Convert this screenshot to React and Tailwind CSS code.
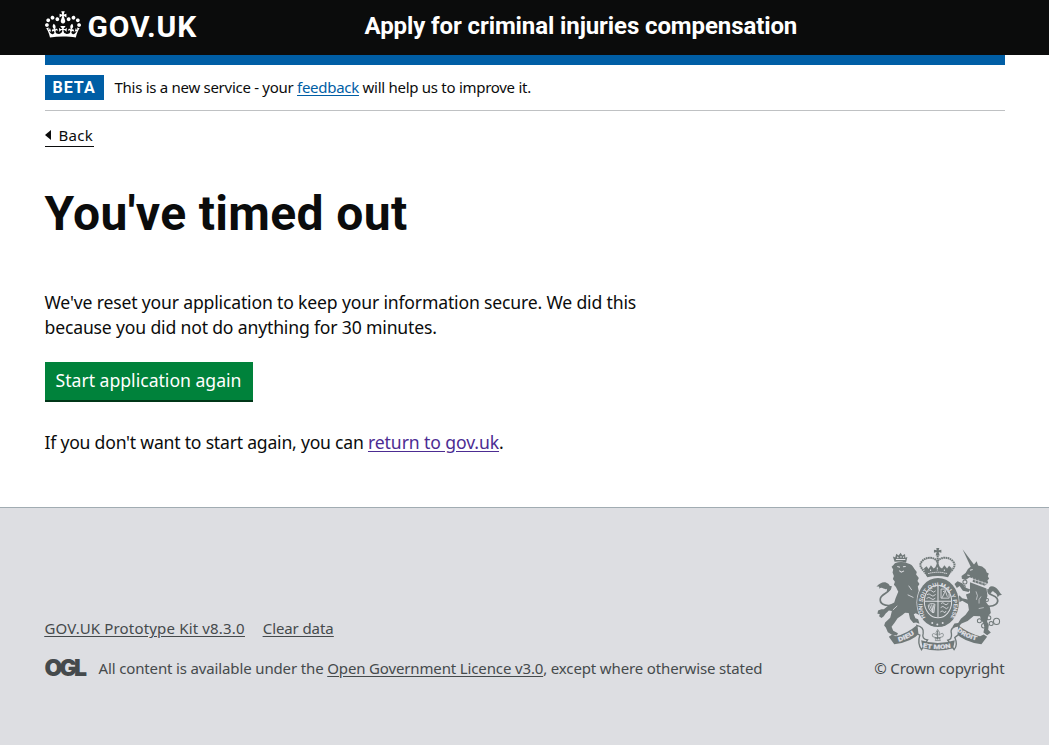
function CrownLogo() {
  return (
    <svg className="h-[27px] w-9" viewBox="0 0 132 97" fill="currentColor" fillRule="evenodd" aria-hidden="true">
      <path d="M25 30.2c3.5 1.5 7.7-.2 9.1-3.7 1.5-3.6-.2-7.8-3.9-9.2-3.6-1.4-7.6.3-9.1 3.9-1.4 3.5.3 7.5 3.9 9zM9 39.5c3.6 1.5 7.8-.2 9.2-3.7 1.5-3.6-.2-7.8-3.9-9.1-3.6-1.5-7.6.2-9.1 3.8-1.4 3.5.3 7.5 3.8 9zM4.4 57.2c3.5 1.5 7.7-.2 9.1-3.8 1.5-3.6-.2-7.7-3.9-9.1-3.5-1.5-7.6.3-9.1 3.8-1.4 3.5.3 7.6 3.9 9.1zm38.3-21.4c3.5 1.5 7.7-.2 9.1-3.8 1.5-3.6-.2-7.7-3.9-9.1-3.6-1.5-7.6.3-9.1 3.8-1.3 3.6.4 7.7 3.9 9.1zm64.4-5.6c-3.6 1.5-7.8-.2-9.1-3.7-1.5-3.6.2-7.8 3.8-9.2 3.6-1.4 7.7.3 9.2 3.9 1.3 3.5-.4 7.5-3.9 9zm15.9 9.3c-3.6 1.5-7.7-.2-9.1-3.7-1.5-3.6.2-7.8 3.7-9.1 3.6-1.5 7.7.2 9.2 3.8 1.5 3.5-.3 7.5-3.8 9zm4.7 17.7c-3.6 1.5-7.8-.2-9.2-3.8-1.5-3.6.2-7.7 3.9-9.1 3.6-1.5 7.7.3 9.2 3.8 1.3 3.5-.4 7.6-3.9 9.1zM89.3 35.8c-3.6 1.5-7.8-.2-9.2-3.8-1.4-3.6.2-7.7 3.9-9.1 3.6-1.5 7.7.3 9.2 3.8 1.4 3.6-.3 7.7-3.9 9.1zM69.7 17.7l8.9 4.7V9.3l-8.9 2.8c-.2-.3-.5-.6-.9-.9L72.4 0H59.6l3.5 11.2c-.3.3-.6.5-.9.9l-8.8-2.8v13.1l8.8-4.7c.3.3.6.7.9.9l-5 15.4v.1c-.2.8-.4 1.6-.4 2.4 0 4.1 3.1 7.5 7 8.1h.2c.3 0 .7.1 1 .1.4 0 .7 0 1-.1h.2c4-.6 7.1-4.1 7.1-8.1 0-.8-.1-1.7-.4-2.4V34l-5.1-15.4c.4-.2.7-.6 1-.9zM66 92.8c16.9 0 32.8 1.1 47.1 3.2 4-16.9 8.9-26.7 14-33.5l-9.6-3.4c1 4.9 1.1 7.2 0 10.2-1.5-1.4-3-4.3-4.2-8.7L108.6 76c2.8-2 5-3.2 7.5-3.3-4.4 9.4-10 11.9-13.6 11.2-4.3-.8-6.3-4.6-5.6-7.9 1-4.7 5.7-5.9 8-.5 4.3-8.7-3-11.4-7.6-8.8 7.1-7.2 7.9-13.5 2.1-21.1-8 6.1-8.1 12.3-4.5 20.8-4.7-5.4-12.1-2.5-9.5 6.2 3.4-5.2 7.9-2 7.2 3.1-.6 4.3-6.4 7.8-13.5 7.2-10.3-.9-10.9-8-11.2-13.8 2.5-.5 7.1 1.8 11 7.3L80.2 60c-4.1 4.4-8 5.3-12.3 5.4 1.4-4.4 8-11.6 8-11.6H55.5s6.4 7.2 7.9 11.6c-4.2-.1-8-1-12.3-5.4l1.4 16.4c3.9-5.5 8.5-7.7 10.9-7.3-.3 5.8-.9 12.8-11.1 13.8-7.2.6-12.9-2.9-13.5-7.2-.7-5 3.8-8.3 7.1-3.1 2.7-8.7-4.6-11.6-9.4-6.2 3.7-8.5 3.6-14.7-4.6-20.8-5.8 7.6-5 13.9 2.2 21.1-4.7-2.6-11.9.1-7.7 8.8 2.3-5.5 7.1-4.2 8.1.5.7 3.3-1.3 7.1-5.7 7.9-3.5.7-9-1.8-13.5-11.2 2.5.1 4.7 1.3 7.5 3.3l-4.7-15.4c-1.2 4.4-2.7 7.2-4.3 8.7-1.1-3-.9-5.3 0-10.2l-9.5 3.4c5 6.9 9.9 16.7 14 33.5 14.8-2.1 30.8-3.2 47.7-3.2z" />
    </svg>
  );
}

const dark = "#6f7878";
const pale = "#dddee2";

function RoyalArms() {
  return (
    <svg className="h-[104px] w-[126px]" viewBox="21 22 374 309" fill={dark} aria-hidden="true">
      {/* lion */}
      <path d="M76 66l-5-16 7 3 3-11 7 5 6-8 5 8 8-4 1 11 6-2-4 17q-16-6-34-3z" />
      <path d="M80 59h28M84 51l3 4M95 49v5M104 50l-2 4" stroke={pale} strokeWidth="3" fill="none" />
      <path d="M77 70q18-7 37 0 15 3 20 16l8 10-2 8 8 10-4 9 6 9-5 7 5 24 3 20-2 42-12-6-6 3 5 12 8 3 4 13-10-4-8 2-10-12-4-18-11-1-8 7-14 10-9 13-9 12 5 12 14 7-3 7-15-2-12-8-6-14-5-6 3-9 15-14 5-20-9-1-10 9-5 8-7 5-7-5 2-7-7-1 2-9 10-4 7 0 15-12 16-8 4-13 8-19-7-14-6-7 3-9-6-8 3-9-4-10 2-9-5-8 5-5z" />
      <path d="M84 80l8 2M101 81l8-1M90 92l6 5 8-4" stroke={pale} strokeWidth="3" fill="none" />
      <path d="M72 194C46 200 30 190 34 174C38 160 66 158 65 138" fill="none" stroke={dark} strokeWidth="5" />
      <path d="M66 146C58 121 38 121 22 140C30 139 32 140 30 146C40 138 44 151 54 146C50 154 57 158 66 146z" />
      <path d="M118 137l9 13M115 164l17 8M71 209l13-12" stroke={pale} strokeWidth="2.5" fill="none" />
      {/* unicorn */}
      <path d="M278 29l36 48-11 5z" />
      <path d="M303 80l9-6 8-10 4 13 12 3 10 8 4 10 6 3-3 8 4 7-5 5 2 8-10 8-37-12 3-9-11-4-12 8-11-4-1-8 12-9 7-12z" />
      <path d="M300 91l8-2M292 105l7 2" stroke={pale} strokeWidth="3" />
      <path d="M304 116l50 17M301 126l48 17" stroke={pale} strokeWidth="2" />
      <path d="M307 112v17M316 116v17M326 119v17M336 123v15M345 126v15" stroke={pale} strokeWidth="1.5" />
      <path d="M300 127l49 18 3 22-5 18 12 16 3 17-8 9-3 17 5 10-2 14 8 8-11 8-11-8 3-15-3-13-7-8-3-12-19-1-18 15-18 7-13 14-14-4 6-10 11-1 8-13 14-12 10-14-3-18-17-9-9 4-6 11-10-4 4-11-9-10-2-14 10 3 4 10 10-5 8 8 16 4-5-15 12-4z" />
      <path d="M261 144l-7-12 9-8 14 6 9 12 15 6-5 8-17-4-10-14z" />
      <path d="M346 197C374 202 388 188 380 174C371 162 351 167 354 147" fill="none" stroke={dark} strokeWidth="5" />
      <path d="M354 155C354 134 371 134 385 151Q389 159 396 165Q387 163 382 172Q381 160 373 157Q365 148 362 161z" />
      <g fill="none" stroke={dark} strokeWidth="3">
        <circle cx="285" cy="126" r="6" /><circle cx="281" cy="140" r="5" />
        <circle cx="328" cy="241" r="6" /><circle cx="341" cy="256" r="6.5" />
        <circle cx="356" cy="232" r="6" /><circle cx="363" cy="249" r="6" />
        <circle cx="379" cy="243" r="9" /><circle cx="350" cy="179" r="5" />
      </g>
      <path d="M318 154q8 13 1 25M333 169q-9 8-6 21M326 205l15-3" stroke={pale} strokeWidth="2" fill="none" />
      {/* royal crown */}
      <path d="M200 25h9l-2 7 8-2v9l-8-2 3 10h-12l3-10-8 2v-9l8 2z" />
      <path d="M174 107C160 88 145 79 157 65C169 50 194 51 203 65C214 50 237 50 250 65C261 79 248 88 233 107" fill="none" stroke={dark} strokeWidth="6" strokeDasharray="5 1.5" />
      <path d="M204 47V92" fill="none" stroke={dark} strokeWidth="6" strokeDasharray="5 1.5" />
      <path d="M163 86l8-7 6 8 7-11 8 10 5-4 7-14 7 14 6 4 7-10 8 10 6-8 8 7-11 27q-31-8-62 0z" />
      <path d="M176 101q28-8 56 0M203 83v9M183 89v4M224 89v4" fill="none" stroke={pale} strokeWidth="3" strokeDasharray="4 2" />
      {/* garter and shield */}
      <ellipse cx="205" cy="187" rx="64" ry="75" fill={pale} />
      <ellipse cx="205" cy="187" rx="62" ry="73" />
      <ellipse cx="205" cy="184" rx="42" ry="50" fill={pale} />
      <ellipse cx="205" cy="184" rx="39" ry="47" />
      <path d="M205 138v92M165 183h80" stroke={pale} strokeWidth="3" />
      <g fill="none" stroke={pale} strokeWidth="2.6">
        <path d="M176 153q6-7 11 0t11-1M172 164q7-6 12 1t14-2M171 175q7-7 13 0t13-1" />
        <path d="M214 190q6-6 10 1t12-2M213 202q7-7 12 0t11-1M212 215q6-6 10 0t7-3" />
        <path d="M214 147h15l9 13v14h-24zM220 155q6-7 9 3t4 12M217 173l12-24" />
        <path d="M176 195q7-8 20-3l-3 25q-15-3-17-22M180 195l10 23M186 193l5 24M193 193l-4 20" />
      </g>
      <path id="garter-line" d="M168 232A46 58 0 1 1 242 232" fill="none" />
      <text className="font-['Roboto',sans-serif] text-[17px] font-bold" fill={pale} textLength="236" lengthAdjust="spacingAndGlyphs"><textPath href="#garter-line">HONI SOIT QUI MAL Y PENSE</textPath></text>
      <g fill={pale}><circle cx="188" cy="248" r="3" /><circle cx="203" cy="252" r="3" /><circle cx="219" cy="248" r="3" /></g>
      {/* motto scroll */}
      <path d="M59 289l10-7 11 5q34-8 60-31l12 21q-27 29-77 34z" />
      <path d="M142 255q22 5 19 23-5 18 13 20l-18 29q-13-19-5-43l-6-3z" fill={pale} stroke={dark} strokeWidth="4" />
      <path d="M351 289l-10-7-11 5q-33-8-63-31l-11 21q29 29 78 34z" />
      <path d="M267 256q-28 3-22 24 2 16-11 19l19 28q12-14 2-36l10-8z" fill={pale} stroke={dark} strokeWidth="4" />
      <path d="M155 299q49 17 100 0l-5 24q-45 13-90 0z" />
      <path d="M204 267q9 9 4 17 13-11 13 0 0 7-8 6l-4 3 3 7h-15l3-7-5-3q-8 0-7-7 2-8 13 1-5-8 3-17z" stroke={dark} strokeWidth="2" fill={pale} />
      <path d="M204 271v26M195 292h18" stroke={dark} strokeWidth="3" />
      <path id="motto-left" d="M88 303Q120 295 146 272" fill="none" />
      <path id="motto-right" d="M261 271Q285 293 328 302" fill="none" />
      <path id="motto-mid" d="M160 320Q204 330 250 320" fill="none" />
      <g className="font-['Roboto',sans-serif] text-[18px] font-black" fill={pale} stroke={pale} strokeWidth="0.6">
        <text textLength="53" lengthAdjust="spacingAndGlyphs"><textPath href="#motto-left">DIEU</textPath></text>
        <text textLength="66" lengthAdjust="spacingAndGlyphs"><textPath href="#motto-right">DROIT</textPath></text>
        <text textLength="84" lengthAdjust="spacingAndGlyphs"><textPath href="#motto-mid">ET MON</textPath></text>
      </g>
    </svg>
  );
}

function Header() {
  return (
    <header className="h-[55px] bg-[#0b0c0c] font-['Roboto',sans-serif] text-white">
      <div className="mx-auto flex w-[960px] items-start">
        <a href="#" className="flex w-[320px] items-start gap-[7px] pt-[11px]">
          <CrownLogo />
          <span className="text-[30px] leading-8 font-bold tracking-[0.8px]">GOV.UK</span>
        </a>
        <a href="#" className="pt-[11px] text-[24px] leading-[30px] font-bold tracking-[-0.1px]">
          Apply for criminal injuries compensation
        </a>
      </div>
    </header>
  );
}

function Footer() {
  return (
    <footer className="h-[238px] border-t border-[#a1acb2] bg-[#dddee2] text-[#454a4c]">
      <div className="mx-auto flex w-[960px] items-end justify-between pt-[39px] text-[15px] leading-5">
        <div>
          <div className="flex gap-[18px] underline underline-offset-2">
            <a href="#" className="tracking-[0.17px]">GOV.UK Prototype Kit v8.3.0</a>
            <a href="#" className="tracking-[-0.1px]">Clear data</a>
          </div>
          <div className="mt-5 flex">
            <span className="w-[54px] font-['Inter',sans-serif] text-[23px] font-black tracking-[-2.8px]">OGL</span>
            <span className="tracking-[-0.14px]">
              All content is available under the <a href="#" className="underline underline-offset-2">Open Government Licence v3.0</a>, except where otherwise stated
            </span>
          </div>
        </div>
        <div className="flex flex-col items-end">
          <div className="pr-[3px]"><RoyalArms /></div>
          <a href="#" className="mt-[7px] tracking-[-0.12px]">© Crown copyright</a>
        </div>
      </div>
    </footer>
  );
}

export default function App() {
  return (
    <div className="min-h-[745px] bg-white font-['Noto_Sans','Liberation_Sans',sans-serif] text-[#0b0c0c]">
      <Header />
      <div className="mx-auto h-[452px] w-[960px]">
        <div className="h-2.5 bg-[#005ea5]" />
        <div className="flex h-[46px] items-center border-b border-[#bfc1c3] text-[15px]">
          <strong className="mr-[11px] h-[25px] w-[59px] bg-[#005ea5] pl-2 font-['Roboto',sans-serif] text-[16px] leading-[25px] font-bold tracking-[1px] text-white">BETA</strong>
          <span className="tracking-[-0.28px]">
            This is a new service - your <a href="#" className="text-[#005ea5] underline underline-offset-2">feedback</a> will help us to improve it.
          </span>
        </div>
        <a href="#" className="mt-3 flex h-6 w-[49px] items-center border-b border-[#0b0c0c] text-[15px] leading-5 tracking-[0.3px]">
          <span className="mr-2 border-y-[5px] border-r-6 border-y-transparent border-r-[#0b0c0c]" />
          Back
        </a>
        <main>
          <h1 className="mt-[42px] font-['Roboto',sans-serif] text-[48px] leading-[50px] font-bold tracking-[0.35px]">You've timed out</h1>
          <p className="mt-[51px] w-[640px] text-[17.6px] leading-[25px] tracking-[-0.17px]">
            We've reset your application to keep your information secure. We did this<br />
            because you did not do anything for 30 minutes.
          </p>
          <button className="mt-[22px] block h-10 w-52 border-b-2 border-[#003618] bg-[#00823b] pb-0.5 text-[17.6px] leading-[36px] text-white">
            Start application again
          </button>
          <p className="mt-[28px] text-[17.6px] leading-[25px] tracking-[-0.22px]">
            If you don't want to start again, you can <a href="#" className="tracking-[-0.1px] text-[#4c2c92] underline underline-offset-2">return to gov.uk</a>.
          </p>
        </main>
      </div>
      <Footer />
    </div>
  );
}
